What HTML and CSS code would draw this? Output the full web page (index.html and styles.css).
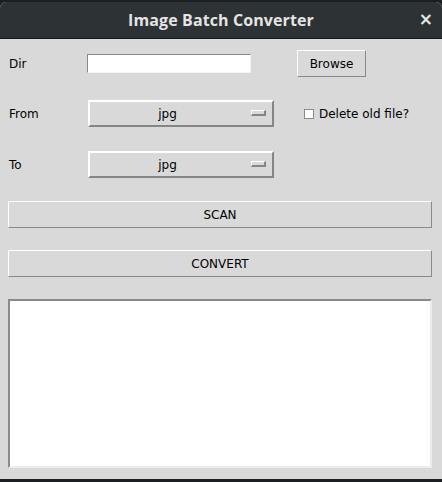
FILE: index.html
```html
<!DOCTYPE html>
<html>
<head>
<meta charset="utf-8">
<link rel="stylesheet" href="styles.css">
</head>
<body>
<div class="top-strip"></div>
<div class="window">
  <div class="titlebar">
    <span class="title">Image Batch Converter</span>
    <span class="close">×</span>
  </div>
  <div class="content">
    <div class="row row-dir">
      <span class="label">Dir</span>
      <div class="entry"></div>
      <div class="btn browse">Browse</div>
    </div>
    <div class="row row-from">
      <span class="label">From</span>
      <div class="optmenu"><span class="opt-text">jpg</span><span class="indicator"></span></div>
      <label class="check"><span class="box"></span>Delete old file?</label>
    </div>
    <div class="row row-to">
      <span class="label">To</span>
      <div class="optmenu"><span class="opt-text">jpg</span><span class="indicator"></span></div>
    </div>
    <div class="btn wide scan">SCAN</div>
    <div class="btn wide convert">CONVERT</div>
    <div class="textbox"></div>
  </div>
</div>
<div class="bottom-strip"></div>
</body>
</html>
```

FILE: styles.css
```css
html, body {
  margin: 0;
  padding: 0;
  width: 442px;
  height: 482px;
  overflow: hidden;
  background: #1c1f21;
  font-family: "DejaVu Sans", sans-serif;
  font-size: 12px;
  color: #000;
}
.top-strip {
  height: 2px;
  background: #1c1f21;
}
.window {
  height: 477px;
  background: #d9d9d9;
  border-radius: 6px 6px 0 0;
  overflow: hidden;
}
.titlebar {
  height: 36px;
  background: #2d3235;
  border-bottom: 1px solid #141617;
  display: flex;
  align-items: center;
  justify-content: center;
  position: relative;
}
.title {
  font-family: "Open Sans", "Noto Sans", sans-serif;
  font-weight: 700;
  font-size: 16px;
  color: #e4e4e4;
  letter-spacing: 0.1px;
}
.close {
  position: absolute;
  right: 9px;
  top: 7px;
  font-family: "DejaVu Sans", sans-serif;
  font-weight: 700;
  font-size: 17px;
  color: #e8e8e8;
}
.content {
  padding: 11px 10px 0 8px;
  display: flex;
  flex-direction: column;
}
.row {
  display: flex;
  align-items: center;
  height: 27px;
}
.row-from { margin-top: 23px; }
.row-to { margin-top: 24px; }
.label {
  width: 79px;
  padding-left: 1px;
  box-sizing: border-box;
}
.entry {
  width: 164px;
  height: 19px;
  box-sizing: border-box;
  background: #fff;
  border-top: 1px solid #8a8a8a;
  border-left: 1px solid #8a8a8a;
  border-bottom: 1px solid #f2f2f2;
  border-right: 1px solid #f2f2f2;
}
.btn {
  box-sizing: border-box;
  background: #d9d9d9;
  border-top: 1px solid #ffffff;
  border-left: 1px solid #ffffff;
  border-bottom: 1px solid #8a8a8a;
  border-right: 1px solid #8a8a8a;
  display: flex;
  align-items: center;
  justify-content: center;
}
.browse {
  margin-left: 46px;
  width: 69px;
  height: 27px;
}
.optmenu {
  margin-left: 1px;
  width: 186px;
  height: 27px;
  box-sizing: border-box;
  border-top: 2px solid #ffffff;
  border-left: 2px solid #ffffff;
  border-bottom: 2px solid #858585;
  border-right: 2px solid #858585;
  position: relative;
  display: flex;
  align-items: center;
  justify-content: center;
}
.opt-text {
  margin-left: -27px;
}
.indicator {
  position: absolute;
  left: 161px;
  top: 8px;
  width: 15px;
  height: 6px;
  box-sizing: border-box;
  border-top: 1px solid #ffffff;
  border-left: 1px solid #ffffff;
  border-bottom: 2px solid #858585;
  border-right: 2px solid #858585;
}
.check {
  margin-left: 30px;
  display: flex;
  align-items: center;
}
.box {
  width: 10px;
  height: 10px;
  box-sizing: border-box;
  background: #fff;
  border: 1px solid #8a8a8a;
  margin-right: 5px;
}
.wide {
  width: 424px;
  height: 27px;
}
.scan { margin-top: 23px; }
.convert { margin-top: 22px; }
.textbox {
  margin-top: 22px;
  width: 424px;
  height: 169px;
  box-sizing: border-box;
  background: #fff;
  border-top: 2px solid #8a8a8a;
  border-left: 2px solid #8a8a8a;
  border-bottom: 2px solid #ececec;
  border-right: 2px solid #ececec;
}
.bottom-strip {
  height: 3px;
  background: #1c1f21;
}
```
